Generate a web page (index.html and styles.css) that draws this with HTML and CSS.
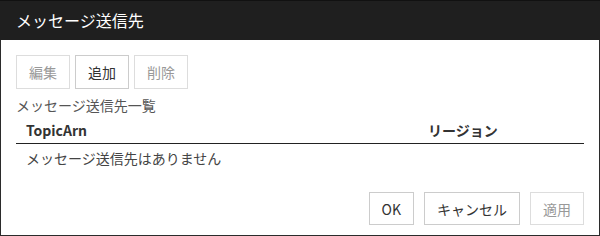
FILE: index.html
```html
<!DOCTYPE html>
<html lang="ja">
<head>
    <meta charset="UTF-8">
    <title>メッセージ送信先</title>
    <link rel="stylesheet" href="styles.css">
</head>
<body>

<div class="dialog">
    <div class="dialog-header">メッセージ送信先</div>

    <div class="dialog-body">
        <div class="toolbar">
            <button class="btn" disabled>編集</button>
            <button class="btn">追加</button>
            <button class="btn" disabled>削除</button>
        </div>

        <div class="caption">メッセージ送信先一覧</div>

        <div class="list">
            <div class="list-head">
                <div>TopicArn</div>
                <div>リージョン</div>
            </div>
            <div class="list-empty">メッセージ送信先はありません</div>
        </div>
    </div>

    <div class="dialog-footer">
        <button class="btn">OK</button>
        <button class="btn">キャンセル</button>
        <button class="btn" disabled>適用</button>
    </div>
</div>

</body>
</html>
```

FILE: styles.css
```css
* {
    box-sizing: border-box;
}

body {
    margin: 0;
    font-family: "Noto Sans CJK JP", "Noto Sans", sans-serif;
    font-size: 14px;
    background: #fff;
}

.dialog {
    width: 600px;
    height: 236px;
    display: flex;
    flex-direction: column;
    border: 1px solid #2b2b2b;
    border-top: none;
    background: #fff;
}

.dialog-header {
    height: 40px;
    margin: 0 -1px;
    padding: 0 16px;
    background: #1f1f1f;
    border-top: 1px solid #111;
    color: #fff;
    font-size: 16px;
    line-height: 38px;
}

.dialog-body {
    padding: 15px 15px 0;
}

.toolbar {
    display: flex;
    gap: 5px;
}

.btn {
    height: 34px;
    padding: 0 12px;
    font-family: inherit;
    font-size: 14px;
    line-height: 20px;
    color: #333;
    background: #fff;
    border: 1px solid #ccc;
    border-radius: 0;
}

.btn:disabled {
    color: #999;
    border-color: #ddd;
}

.caption {
    margin-top: 6px;
    line-height: 20px;
    color: #555;
}

.list-head {
    display: grid;
    grid-template-columns: 402px 1fr;
    height: 29px;
    padding: 2px 10px 0;
    line-height: 26px;
    font-weight: bold;
    color: #333;
    border-bottom: 1px solid #222;
}

.list-empty {
    height: 28px;
    padding: 0 10px;
    line-height: 28px;
    color: #444;
}

.dialog-footer {
    margin-top: auto;
    display: flex;
    justify-content: flex-end;
    gap: 10px;
    padding: 0 15px 10px;
}

.dialog-footer .btn {
    height: 33px;
}
```
